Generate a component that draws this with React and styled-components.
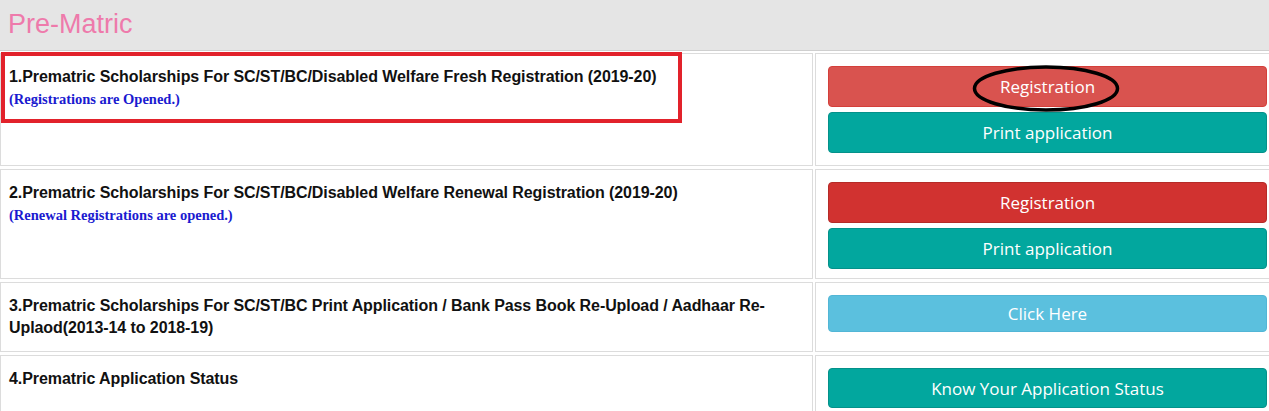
import React from "react";
import styled, { createGlobalStyle } from "styled-components";

const Global = createGlobalStyle`
  html, body { margin: 0; padding: 0; overflow: hidden; background: #fff; }
  body { font-family: "Liberation Sans", Arial, sans-serif; }
`;

const Header = styled.div`
  height: 50px;
  background: #e5e5e5;
  border-bottom: 1px solid #cfcfcf;
  display: flex;
  align-items: center;
  padding-left: 8px;
`;

const Title = styled.h2`
  margin: 0;
  font-family: "Liberation Sans", Arial, sans-serif;
  font-weight: normal;
  font-size: 27px;
  color: #ee7aab;
  line-height: 1;
  transform: translateY(-1px);
`;

const Table = styled.div`
  display: grid;
  grid-template-columns: 813px 465px;
  gap: 3px 2px;
  padding-top: 2px;
  width: 1280px;
`;

const LeftCell = styled.div`
  position: relative;
  border: 1px solid #dcdcdc;
  padding: 12px 8px;
`;

const RightCell = styled.div`
  border: 1px solid #dcdcdc;
  padding: 12px 12px ${(p) => p.$pb ?? 12}px;
  display: flex;
  flex-direction: column;
  gap: 5px;
`;

const ItemTitle = styled.div`
  font-family: "Liberation Sans", Arial, sans-serif;
  font-weight: bold;
  font-size: 16px;
  letter-spacing: -0.08px;
  line-height: 22px;
  color: #111;
`;

const Note = styled.div`
  font-family: "Liberation Serif", "Times New Roman", serif;
  font-weight: bold;
  font-size: 14.5px;
  line-height: 23px;
  color: #1a1ad0;
`;

const colors = {
  danger: { bg: "#d9534f", border: "#d43f3a" },
  dangerDark: { bg: "#d13230", border: "#b52b27" },
  teal: { bg: "#02a79e", border: "#04918a" },
  info: { bg: "#5bc0de", border: "#52b6d6" },
};

const Button = styled.a`
  position: relative;
  display: flex;
  align-items: center;
  justify-content: center;
  flex: none;
  height: ${(p) => p.$h || 41}px;
  box-sizing: border-box;
  border-radius: 4px;
  background: ${(p) => colors[p.$variant].bg};
  border: 1px solid ${(p) => colors[p.$variant].border};
  color: #fff;
  font-family: "Open Sans", "Noto Sans", sans-serif;
  font-size: 17px;
  text-decoration: none;
  cursor: pointer;
`;

const Highlight = styled.div`
  position: absolute;
  left: 0;
  top: -2px;
  width: 681px;
  height: 71px;
  box-sizing: border-box;
  border: 4px solid #e2222b;
  pointer-events: none;
`;

const Ellipse = styled.svg`
  position: absolute;
  left: 143px;
  top: -2px;
  width: 148px;
  height: 47px;
  pointer-events: none;
`;

export default function App() {
  return (
    <>
      <Global />
      <Header>
        <Title>Pre-Matric</Title>
      </Header>
      <Table>
        <LeftCell>
          <ItemTitle>
            1.Prematric Scholarships For SC/ST/BC/Disabled Welfare Fresh Registration (2019-20)
          </ItemTitle>
          <Note>(Registrations are Opened.)</Note>
          <Highlight />
        </LeftCell>
        <RightCell>
          <Button $variant="danger">
            Registration
            <Ellipse viewBox="0 0 148 47">
              <ellipse cx="74" cy="23.5" rx="71.5" ry="21.5" fill="none" stroke="#000" strokeWidth="3.5" />
            </Ellipse>
          </Button>
          <Button $variant="teal">Print application</Button>
        </RightCell>

        <LeftCell>
          <ItemTitle>
            2.Prematric Scholarships For SC/ST/BC/Disabled Welfare Renewal Registration (2019-20)
          </ItemTitle>
          <Note>(Renewal Registrations are opened.)</Note>
        </LeftCell>
        <RightCell $pb={9}>
          <Button $variant="dangerDark">Registration</Button>
          <Button $variant="teal">Print application</Button>
        </RightCell>

        <LeftCell>
          <ItemTitle>
            3.Prematric Scholarships For SC/ST/BC Print Application / Bank Pass Book Re-Upload / Aadhaar Re-Uplaod(2013-14 to 2018-19)
          </ItemTitle>
        </LeftCell>
        <RightCell>
          <Button $variant="info" $h={37}>Click Here</Button>
        </RightCell>

        <LeftCell>
          <ItemTitle>4.Prematric Application Status</ItemTitle>
        </LeftCell>
        <RightCell>
          <Button $variant="teal" $h={40}>Know Your Application Status</Button>
        </RightCell>
      </Table>
    </>
  );
}
